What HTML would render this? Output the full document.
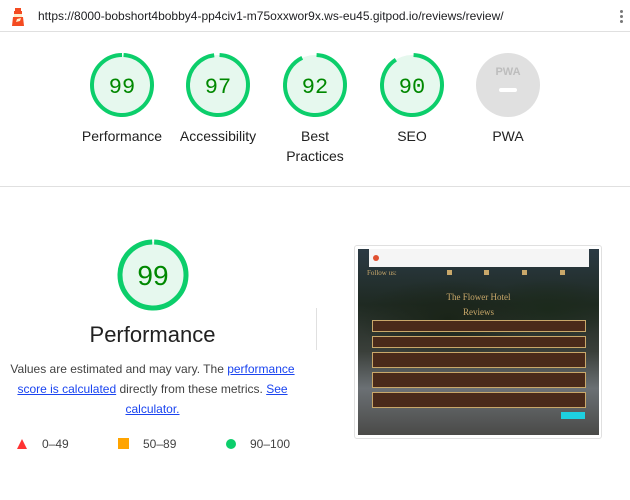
<!DOCTYPE html>
<html><head><meta charset="utf-8"><style>
*{margin:0;padding:0;box-sizing:border-box}
body{width:630px;height:500px;background:#fff;font-family:"Liberation Sans",Arial,sans-serif;position:relative;overflow:hidden;color:#212121}
.a{position:absolute}
.lbl{position:absolute;font-size:14px;color:#212121;text-align:center;width:100px;line-height:20px}
.num{font-family:"Liberation Mono",monospace;fill:#008800;text-anchor:middle}
a{color:#0b57d0;color:#1a44f0;text-decoration:underline}
</style></head><body>
<div class="a" style="left:0;top:0;width:630px;height:32px;border-bottom:1px solid #e0e0e0"></div>
<svg class="a" style="left:10px;top:8px" width="16" height="18" viewBox="0 0 16 18"><rect x="5" y="0" width="6" height="3" fill="#f44b21"/><rect x="4" y="3" width="8" height="3" fill="#f44b21"/><rect x="4" y="6" width="8" height="3" fill="#fec"/><path d="M3 9 H13 L14 18 H2 Z" fill="#f44b21"/><path d="M7 11 L11 10 L10 13 L6 14Z" fill="#fec"/></svg>
<div class="a" style="left:38px;top:9px;font-size:12px;color:#202124">https://8000-bobshort4bobby4-pp4civ1-m75oxxwor9x.ws-eu45.gitpod.io/reviews/review/</div>
<div class="a" style="left:620px;top:10px;width:3px;height:3px;border-radius:50%;background:#777;box-shadow:0 5px 0 #777,0 10px 0 #777"></div>

<svg class="a" style="left:0;top:0" width="630" height="200">
<g fill="#e6f8ee" stroke="#0cce6b" stroke-width="4">
<circle cx="122" cy="85" r="30" stroke-dasharray="186.6 188.5" transform="rotate(-87 122 85)"/>
<circle cx="218" cy="85" r="30" stroke-dasharray="182.8 188.5" transform="rotate(-87 218 85)"/>
<circle cx="315" cy="85" r="30" stroke-dasharray="173.4 188.5" transform="rotate(-87 315 85)"/>
<circle cx="412" cy="85" r="30" stroke-dasharray="169.6 188.5" transform="rotate(-87 412 85)"/>
</g>
<circle cx="508" cy="85" r="32" fill="#e0e0e0"/>
<text x="508" y="75" font-size="11" font-weight="bold" fill="#bdbdbd" text-anchor="middle" font-family="Liberation Sans">PWA</text>
<rect x="499" y="88" width="18" height="4" rx="2" fill="#fff"/>
<text class="num" x="122" y="93" font-size="22">99</text>
<text class="num" x="218" y="93" font-size="22">97</text>
<text class="num" x="315" y="93" font-size="22">92</text>
<text class="num" x="412" y="93" font-size="22">90</text>
</svg>
<div class="lbl" style="left:72px;top:126px">Performance</div>
<div class="lbl" style="left:168px;top:126px">Accessibility</div>
<div class="lbl" style="left:265px;top:126px">Best<br>Practices</div>
<div class="lbl" style="left:362px;top:126px">SEO</div>
<div class="lbl" style="left:458px;top:126px">PWA</div>
<div class="a" style="left:0;top:186px;width:630px;height:1px;background:#e0e0e0"></div>

<svg class="a" style="left:110px;top:233px" width="86" height="86">
<circle cx="43" cy="42" r="33" fill="#e6f8ee" stroke="#0cce6b" stroke-width="5" stroke-dasharray="205 207.3" transform="rotate(-88 43 42)"/>
<text class="num" x="43" y="52" font-size="28" style="font-family:'Liberation Sans',sans-serif">99</text>
</svg>
<div class="a" style="left:0;top:322px;width:305px;text-align:center;font-size:22px;color:#212121">Performance</div>
<div class="a" style="left:6px;top:359px;width:293px;text-align:center;font-size:12px;line-height:20px;color:#424242">Values are estimated and may vary. The <a>performance score is calculated</a> directly from these metrics. <a>See calculator.</a></div>
<svg class="a" style="left:16px;top:438px" width="12" height="12"><path d="M6 1 L11 11 H1Z" fill="#f33"/></svg>
<div class="a" style="left:42px;top:437px;font-size:12px;color:#424242">0–49</div>
<div class="a" style="left:118px;top:438px;width:11px;height:11px;background:#ffa400"></div>
<div class="a" style="left:143px;top:437px;font-size:12px;color:#424242">50–89</div>
<div class="a" style="left:226px;top:439px;width:10px;height:10px;border-radius:50%;background:#0cce6b"></div>
<div class="a" style="left:250px;top:437px;font-size:12px;color:#424242">90–100</div>
<div class="a" style="left:316px;top:308px;width:1px;height:42px;background:#e0e0e0"></div>

<div class="a" style="left:354px;top:245px;width:248px;height:194px;border:1px solid #e0e0e0;border-radius:3px;background:#fff"></div>
<div class="a" style="left:358px;top:249px;width:241px;height:186px;background:linear-gradient(180deg,#2b3a44 0%,#1f2a22 30%,#3a3f3a 55%,#6b7074 75%,#4a4a48 100%)"></div>
<div class="a" style="left:358px;top:249px;width:241px;height:186px;background:radial-gradient(ellipse 90px 40px at 90px 70px,#1a2418 0%,transparent 100%),radial-gradient(ellipse 70px 30px at 190px 60px,#1c2a1c 0%,transparent 100%)"></div>
<div class="a" style="left:369px;top:249px;width:220px;height:18px;background:#f5f5f5"></div>
<div class="a" style="left:373px;top:255px;width:6px;height:6px;border-radius:50%;background:#e05030"></div>
<div class="a" style="left:367px;top:269px;font-size:7px;color:#c9a86a;font-family:'Liberation Serif',serif">Follow us:</div>
<div class="a" style="left:447px;top:270px;width:5px;height:5px;background:#c9a86a;box-shadow:37px 0 #c9a86a,75px 0 #c9a86a,113px 0 #c9a86a"></div>
<div class="a" style="left:358px;top:290px;width:241px;text-align:center;font-size:9px;line-height:15px;color:#c9a86a;font-family:'Liberation Serif',serif">The Flower Hotel<br>Reviews</div>
<div class="a" style="left:372px;top:320px;width:214px;height:12px;background:#4a2a1a;border:1px solid #c9a86a"></div>
<div class="a" style="left:372px;top:336px;width:214px;height:12px;background:#4a2a1a;border:1px solid #c9a86a"></div>
<div class="a" style="left:372px;top:352px;width:214px;height:16px;background:#4a2a1a;border:1px solid #c9a86a"></div>
<div class="a" style="left:372px;top:372px;width:214px;height:16px;background:#4a2a1a;border:1px solid #c9a86a"></div>
<div class="a" style="left:372px;top:392px;width:214px;height:16px;background:#4a2a1a;border:1px solid #c9a86a"></div>
<div class="a" style="left:561px;top:412px;width:24px;height:7px;background:#1ed0e0"></div>
</body></html>
